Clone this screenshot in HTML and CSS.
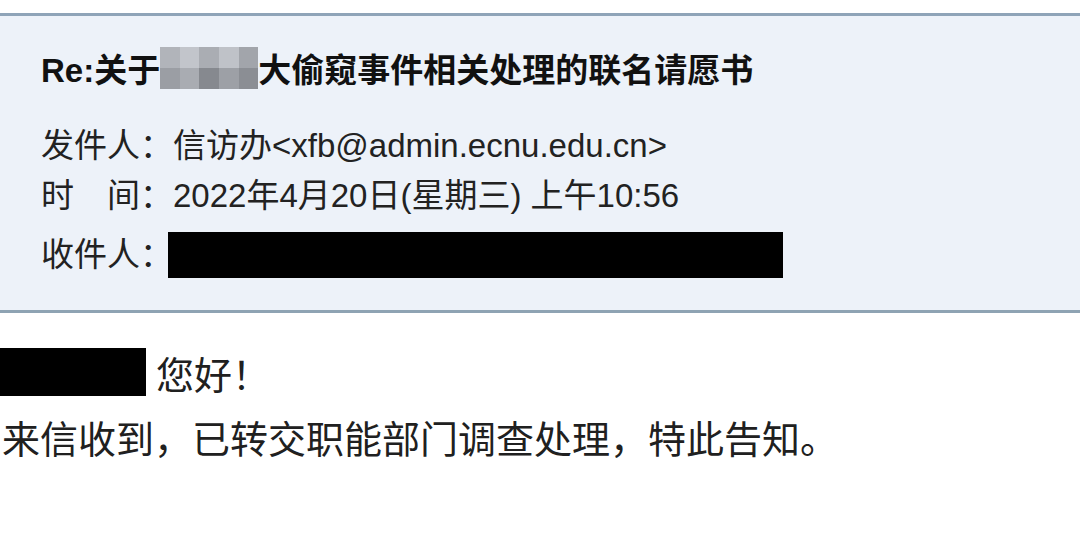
FILE: index.html
```html
<!DOCTYPE html>
<html><head><meta charset="utf-8"/>
<link rel="stylesheet" href="styles.css">
<title>Re:关于大偷窥事件相关处理的联名请愿书</title></head>
<body>
<div class="mail-head">
 <h3 class="subject">Re:关于<span class="mosaic"><i class="m1"></i><i class="m2"></i><i class="m3"></i><i class="m4"></i><i class="m5"></i><i class="m6"></i><i class="m7"></i><i class="m8"></i><i class="m9"></i><i class="m10"></i></span>大偷窥事件相关处理的联名请愿书</h3>
 <div class="row first"><span class="label">发件人：</span>信访办&lt;xfb@admin.ecnu.edu.cn&gt;</div>
 <div class="row"><span class="label">时　间：</span>2022年4月20日(星期三) 上午10:56</div>
 <div class="row to"><span class="label">收件人：</span><span class="redact wide"></span></div>
</div>
<div class="mail-body">
 <div class="greet"><span class="redact name"></span>您好！</div>
 <p class="line">来信收到，已转交职能部门调查处理，特此告知。</p>
</div>
</body></html>
```

FILE: styles.css
```css
*{ padding:0; margin:0; }
body{ background:#fff; color:#1c1c1c; font-family:"Liberation Sans","Noto Sans CJK SC",sans-serif; overflow:hidden; }
.mail-head{ margin-top:13px; background:#edf2f9; border-top:3px solid #8fa4b8; border-bottom:3px solid #8ea3b3; padding:35px 0 32px 41px; height:227px; }
.subject{ font-size:33px; height:40px; line-height:40px; font-weight:bold; color:#111; white-space:nowrap; display:flex; align-items:center; }
.mosaic{ display:grid; grid-template-columns:repeat(5,1fr); width:98px; height:42px; margin-top:-6px; }
.mosaic i{ display:block; }
.m1{background:#b1b4ba;} .m2{background:#c2c5cb;} .m3{background:#aaadb3;} .m4{background:#bfc2c8;} .m5{background:#a2a5ab;}
.m6{background:#9b9ea4;} .m7{background:#a9acb2;} .m8{background:#86898f;} .m9{background:#9da0a6;} .m10{background:#8b8e94;}
.row{ font-size:33px; line-height:40px; color:#222; margin-top:10px; display:flex; align-items:center; white-space:pre; }
.row.first{ margin-top:35px; }
.row.to{ margin-top:16px; height:46px; }
.label{ width:132px; }
.redact{ display:inline-block; background:#000; }
.wide{ width:615px; height:46px; margin-left:-5px; }
.mail-body{ font-family:"Noto Sans CJK SC",sans-serif; font-size:38px; color:#202020; }
.greet{ margin-top:35px; height:48px; display:flex; align-items:center; gap:10px; }
.name{ width:146px; height:48px; }
.line{ margin-top:17px; line-height:48px; padding-left:2px; }
```
